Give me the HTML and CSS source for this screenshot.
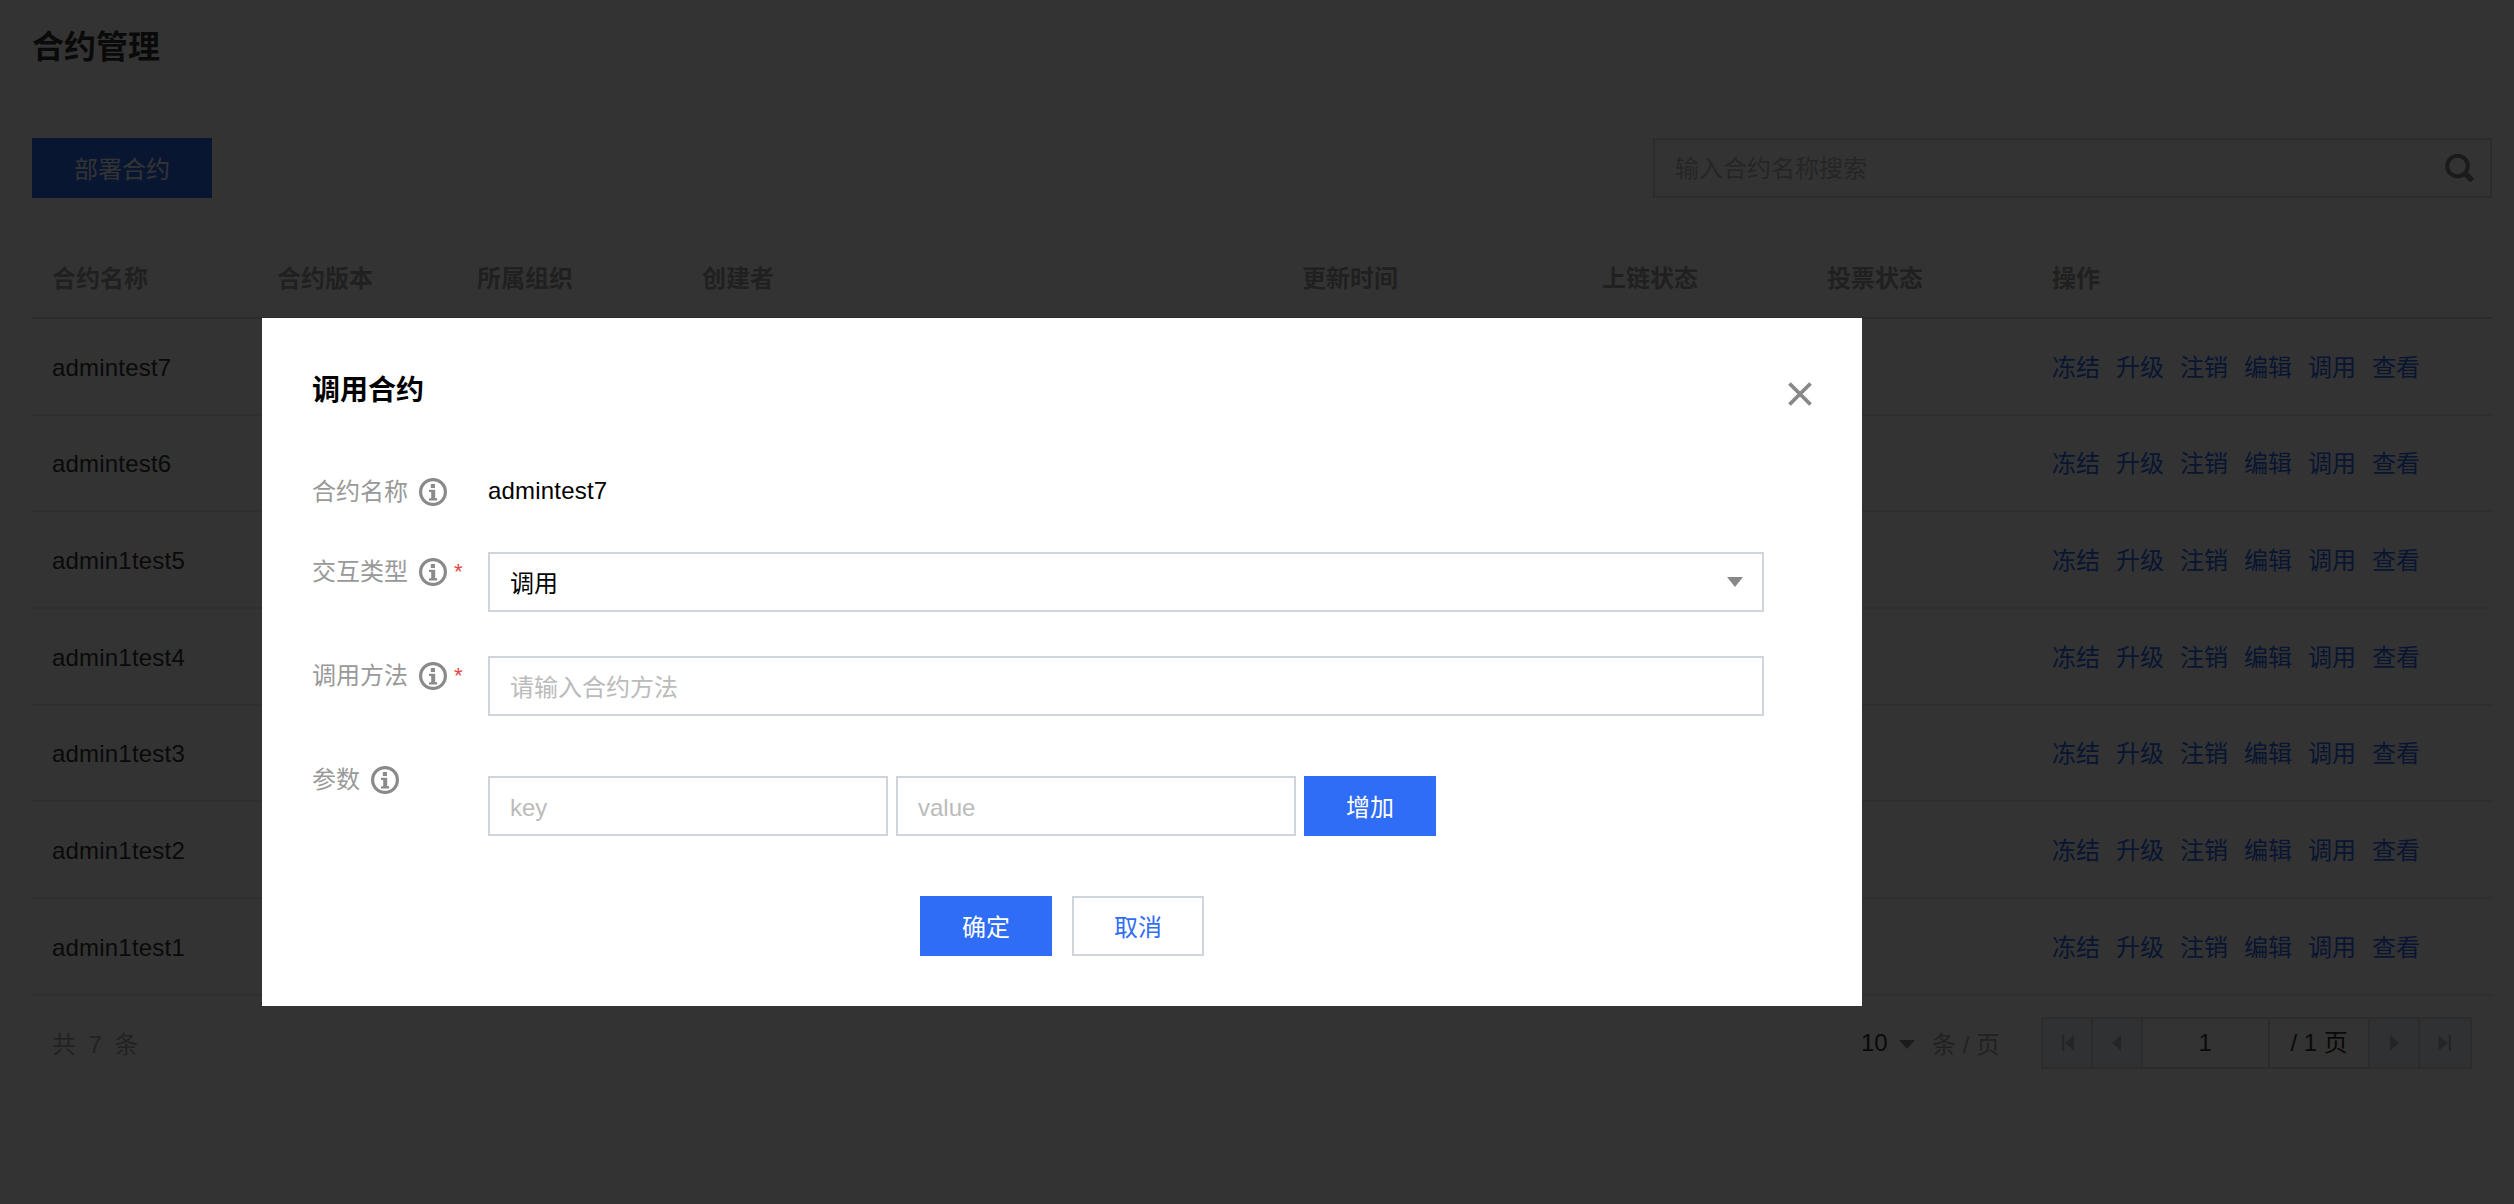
FILE: index.html
```html
<!DOCTYPE html>
<html lang="zh-CN">
<head>
<meta charset="utf-8">
<title>合约管理</title>
<link rel="stylesheet" href="styles.css">
</head>
<body>
<svg class="sprite" width="0" height="0" aria-hidden="true">
  <symbol id="info" viewBox="0 0 28 28">
    <circle cx="14" cy="14" r="12.400" fill="none" stroke="#8a8a8a" stroke-width="3.200"/>
    <rect x="11.800" y="6" width="4.200" height="4" fill="#8a8a8a"/>
    <path d="M10 11.800h6.200v8.400h2v2.300h-8.200v-2.300h2.200v-6.100h-2.200z" fill="#8a8a8a"/>
  </symbol>
</svg>
<main class="page">
  <h1 class="page-title">合约管理</h1>
  <div class="toolbar">
    <button class="btn btn-primary btn-deploy" type="button">部署合约</button>
    <div class="search">
      <span class="search-placeholder">输入合约名称搜索</span>
      <svg class="search-icon" viewBox="0 0 30 28"><circle cx="12.500" cy="12" r="10.300" fill="none" stroke="#888" stroke-width="4"/><path d="M20.500 19.800l6.800 6.800" stroke="#888" stroke-width="5.500" fill="none"/></svg>
    </div>
  </div>
  <table class="table">
    <colgroup><col class="c0"><col class="c1"><col class="c2"><col class="c3"><col class="c4"><col class="c5"><col class="c6"><col class="c7"></colgroup>
    <thead><tr><th>合约名称</th><th>合约版本</th><th>所属组织</th><th>创建者</th><th>更新时间</th><th>上链状态</th><th>投票状态</th><th>操作</th></tr></thead>
    <tbody>
      <tr><td>admintest7</td><td></td><td></td><td></td><td></td><td></td><td></td><td class="ops"><a>冻结</a><a>升级</a><a>注销</a><a>编辑</a><a>调用</a><a>查看</a></td></tr>
      <tr><td>admintest6</td><td></td><td></td><td></td><td></td><td></td><td></td><td class="ops"><a>冻结</a><a>升级</a><a>注销</a><a>编辑</a><a>调用</a><a>查看</a></td></tr>
      <tr><td>admin1test5</td><td></td><td></td><td></td><td></td><td></td><td></td><td class="ops"><a>冻结</a><a>升级</a><a>注销</a><a>编辑</a><a>调用</a><a>查看</a></td></tr>
      <tr><td>admin1test4</td><td></td><td></td><td></td><td></td><td></td><td></td><td class="ops"><a>冻结</a><a>升级</a><a>注销</a><a>编辑</a><a>调用</a><a>查看</a></td></tr>
      <tr><td>admin1test3</td><td></td><td></td><td></td><td></td><td></td><td></td><td class="ops"><a>冻结</a><a>升级</a><a>注销</a><a>编辑</a><a>调用</a><a>查看</a></td></tr>
      <tr><td>admin1test2</td><td></td><td></td><td></td><td></td><td></td><td></td><td class="ops"><a>冻结</a><a>升级</a><a>注销</a><a>编辑</a><a>调用</a><a>查看</a></td></tr>
      <tr><td>admin1test1</td><td></td><td></td><td></td><td></td><td></td><td></td><td class="ops"><a>冻结</a><a>升级</a><a>注销</a><a>编辑</a><a>调用</a><a>查看</a></td></tr>
    </tbody>
  </table>
  <footer class="table-foot">
    <div class="total"><span>共</span><span>7</span><span>条</span></div>
    <div class="page-size">
      <span class="size-value">10</span>
      <span class="size-caret"></span>
      <span class="size-unit">条 / 页</span>
    </div>
    <div class="pager">
      <span class="pg-btn"><svg viewBox="0 0 16 16"><path d="M3 0h2.200v16H3zM15 0v16L6 8z"/></svg></span>
      <span class="pg-btn"><svg viewBox="0 0 16 16"><path d="M12 0v16L3 8z"/></svg></span>
      <span class="pg-input">1</span>
      <span class="pg-count">/ 1 页</span>
      <span class="pg-btn"><svg viewBox="0 0 16 16"><path d="M4 0v16l9-8z"/></svg></span>
      <span class="pg-btn pg-last"><svg viewBox="0 0 16 16"><path d="M1.500 0v16l9-8zM11.800 0H14v16h-2.200z"/></svg></span>
    </div>
  </footer>
</main>
<div class="overlay">
  <section class="modal">
    <h2 class="modal-title">调用合约</h2>
    <svg class="modal-close" viewBox="0 0 24 24"><path d="M1.500 1.500l21 21M22.500 1.500l-21 21" stroke="#888" stroke-width="3.800" fill="none"/></svg>
    <div class="form-row row-name">
      <div class="form-label">合约名称<svg class="info"><use href="#info"/></svg></div>
      <div class="form-value">admintest7</div>
    </div>
    <div class="form-row">
      <div class="form-label">交互类型<svg class="info"><use href="#info"/></svg><span class="req">*</span></div>
      <div class="field field-wide field-select"><span>调用</span><span class="select-caret"></span></div>
    </div>
    <div class="form-row">
      <div class="form-label">调用方法<svg class="info"><use href="#info"/></svg><span class="req">*</span></div>
      <div class="field field-wide placeholder">请输入合约方法</div>
    </div>
    <div class="form-row">
      <div class="form-label">参数<svg class="info"><use href="#info"/></svg></div>
      <div class="params">
        <div class="field field-half placeholder">key</div>
        <div class="field field-half placeholder">value</div>
        <button class="btn btn-primary" type="button">增加</button>
      </div>
    </div>
    <div class="modal-actions">
      <button class="btn btn-primary" type="button">确定</button>
      <button class="btn btn-ghost" type="button">取消</button>
    </div>
  </section>
</div>
</body>
</html>
```
FILE: styles.css
```css
* { box-sizing: border-box; }
html, body { margin: 0; height: 100%; }
body {
  background: #fff;
  color: #000;
  font: 24px/36px "Liberation Sans", "Noto Sans CJK SC", sans-serif;
  overflow: hidden;
}
.sprite { position: absolute; }
.page { padding: 0 22px 0 32px; }
.page-title {
  margin: 0;
  height: 138px;
  padding-top: 25px;
  font-size: 32px;
  line-height: 44px;
  font-weight: 700;
  color: #333;
}
.toolbar { display: flex; justify-content: space-between; height: 60px; margin-bottom: 40px; }
.btn {
  width: 132px;
  height: 60px;
  padding: 4px 0 0;
  border: 0;
  font: inherit;
  border-radius: 0;
}
.btn-primary { background: #2f6df6; color: #fff; }
.btn-deploy { width: 180px; }
.btn-ghost { background: #fff; color: #2f6df6; border: 2px solid #d0d5dd; }
.search {
  width: 839px;
  display: flex;
  align-items: center;
  justify-content: space-between;
  padding: 0 15px 0 20px;
  border: 2px solid #ddd;
}
.search-placeholder { color: #bbb; padding-top: 2px; }
.search-icon { width: 30px; height: 28px; }
.table { width: 100%; border-collapse: collapse; table-layout: fixed; }
.c0 { width: 225px; } .c1 { width: 200px; } .c2 { width: 225px; } .c3 { width: 600px; }
.c4 { width: 300px; } .c5 { width: 225px; } .c6 { width: 225px; } .c7 { width: 460px; }
.table th {
  height: 80px;
  padding: 2px 0 0 20px;
  text-align: left;
  font-weight: 700;
  color: #a0a0a0;
  border-bottom: 2px solid #ddd;
}
.table td {
  height: 96.67px;
  padding: 3px 0 0 20px;
  border-bottom: 2px solid #e8e8e8;
  color: #333;
}
.table td:first-child { letter-spacing: .2px; }
.ops { white-space: nowrap; }
.table .ops a { color: #2f6df6; margin-right: 16px; }
.table-foot { position: relative; display: flex; align-items: center; height: 52px; margin-top: 21px; }
.total { display: flex; gap: 12.500px; padding-left: 20px; color: #aaa; margin-top: 4px; }
.page-size { display: flex; align-items: center; margin-left: auto; margin-right: 41px; }
.size-value { width: 38px; color: #333; }
.size-caret {
  width: 0; height: 0;
  border-left: 8px solid transparent;
  border-right: 8px solid transparent;
  border-top: 9px solid #888;
  margin-right: 17px;
  margin-top: 3px;
}
.size-unit { color: #aaa; padding-top: 4px; }
.pager { display: flex; height: 52px; width: 431px; margin-right: 20px; border: 2px solid #ddd; color: #333; }
.pg-btn {
  width: 50px;
  display: flex;
  align-items: center;
  justify-content: center;
  background: #f0f3f7;
  border-right: 2px solid #ddd;
}
.pg-btn + .pg-input { width: 128px; }
.pg-last { border-right: 0; }
.pg-btn svg { width: 16px; height: 16px; fill: #bbb; }
.pg-input { text-align: center; border-right: 2px solid #ddd; line-height: 48px; background: #fff; }
.pg-count { width: 101px; line-height: 48px; text-align: center; border-right: 2px solid #ddd; }
.overlay { position: fixed; inset: 0; background: rgba(0, 0, 0, .8); }
.modal {
  position: absolute;
  left: 262px;
  top: 318px;
  width: 1600px;
  padding: 50px;
  background: #fff;
}
.modal-title { margin: 0; height: 44px; padding-top: 2px; font-size: 28px; line-height: 42px; font-weight: 700; }
.modal-close { position: absolute; top: 64px; right: 50px; width: 24px; height: 24px; }
.form-row { display: flex; margin-top: 44px; }
.row-name { margin-top: 60px; }
.form-label { width: 176px; display: flex; align-items: center; height: 36px; padding-top: 3px; color: #999; }
.info { width: 28px; height: 28px; margin-left: 11px; flex: none; }
.req { color: #e54545; font-size: 22px; margin-left: 7px; }
.form-value { color: #000; height: 36px; padding-top: 1px; letter-spacing: .2px; }
.field {
  height: 60px;
  border: 2px solid #d0d5dd;
  display: flex;
  align-items: center;
  padding: 4px 20px 0;
}
.field-wide { width: 1276px; }
.field-half { width: 400px; }
.field-select { justify-content: space-between; padding-right: 19px; }
.placeholder { color: #bbb; }
.select-caret {
  width: 0; height: 0;
  border-left: 8px solid transparent;
  border-right: 8px solid transparent;
  border-top: 10px solid #888;
  margin-top: -4px;
}
.params { display: flex; gap: 8px; padding-top: 16px; }
.modal-actions { display: flex; justify-content: center; gap: 20px; margin-top: 60px; }
```
